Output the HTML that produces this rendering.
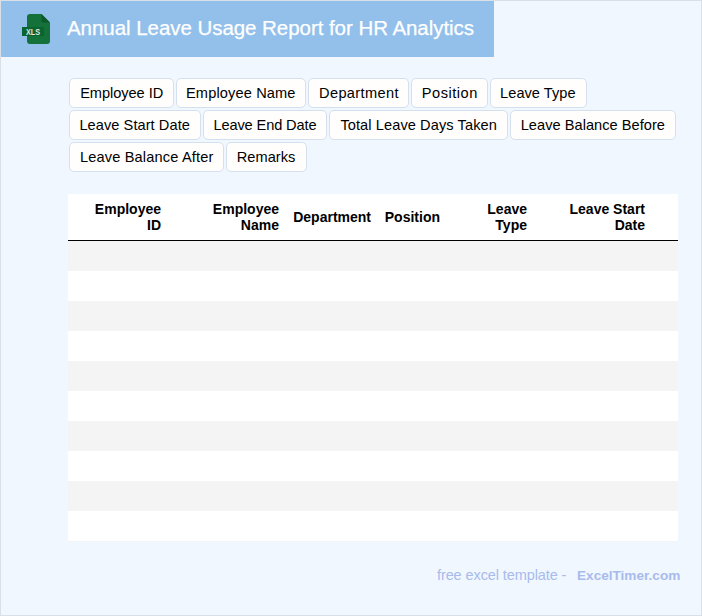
<!DOCTYPE html>
<html><head><meta charset="utf-8">
<style>
html,body{margin:0;padding:0}
body{width:700px;height:614px;border:1px solid #d9e0e8;background:#f0f7fe;position:relative;overflow:hidden;font-family:"Liberation Sans",sans-serif}
.hdr{position:absolute;left:0;top:0;width:493px;height:56px;background:#92c0eb}
.ttl{position:absolute;left:66px;top:15px;font-size:20.5px;line-height:23px;color:#fff;letter-spacing:-0.05px;-webkit-text-stroke:0.25px #fff;white-space:nowrap}
.icon{position:absolute;left:18px;top:11px;width:32px;height:34px}
.chip{position:absolute;height:28px;border:1px solid #d5e0ee;border-radius:5px;background:#fffefc;box-sizing:content-box;white-space:nowrap}
.chip span{position:absolute;top:0;font-size:14.6px;line-height:28px;color:#000}
.tbl{position:absolute;left:67px;top:193px;width:610px;height:348px;background:#fff}
.th{position:absolute;font-size:14px;font-weight:bold;line-height:16px;color:#000;text-align:right;white-space:nowrap}
.line{position:absolute;left:0;top:46px;width:610px;height:1px;background:#000}
.row{position:absolute;left:0;width:610px;height:30px}
.g{background:#f4f4f4}
.foot{position:absolute;top:566px;white-space:nowrap;color:#a8bbec}
</style></head><body>
<div class="hdr">
  <svg class="icon" viewBox="0 0 32 34" width="32" height="34">
    <path d="M11 2 H22.5 L31 10.5 V29 A3 3 0 0 1 28 32 H11 A3 3 0 0 1 8 29 V5 A3 3 0 0 1 11 2 Z" fill="#147139"/>
    <path d="M22.5 2 L31 10.5 H22.5 Z" fill="#0c5a2c"/>
    <rect x="3" y="15" width="22" height="9" fill="#0a6430"/>
    <text x="7" y="22.9" font-family="Liberation Sans" font-size="8.2" font-weight="bold" fill="#e4e9e0" textLength="14" lengthAdjust="spacingAndGlyphs">XLS</text>
  </svg>
  <div class="ttl">Annual Leave Usage Report for HR Analytics</div>
</div>
<div class="chip" style="left:68px;top:77px;width:103px"><span style="left:10.2px;letter-spacing:-0.055px">Employee ID</span></div>
<div class="chip" style="left:175px;top:77px;width:128px"><span style="left:9.0px;letter-spacing:0.134px">Employee Name</span></div>
<div class="chip" style="left:307px;top:77px;width:99px"><span style="left:10.0px;letter-spacing:0.361px">Department</span></div>
<div class="chip" style="left:410px;top:77px;width:75px"><span style="left:9.8px;letter-spacing:0.511px">Position</span></div>
<div class="chip" style="left:489px;top:77px;width:95px"><span style="left:9.1px;letter-spacing:0.033px">Leave Type</span></div>
<div class="chip" style="left:68px;top:109px;width:130px"><span style="left:9.4px;letter-spacing:0.065px">Leave Start Date</span></div>
<div class="chip" style="left:202px;top:109px;width:122px"><span style="left:9.4px;letter-spacing:-0.113px">Leave End Date</span></div>
<div class="chip" style="left:328px;top:109px;width:177px"><span style="left:10.4px;letter-spacing:0.086px">Total Leave Days Taken</span></div>
<div class="chip" style="left:509px;top:109px;width:164px"><span style="left:9.7px;letter-spacing:0.036px">Leave Balance Before</span></div>
<div class="chip" style="left:68px;top:141px;width:153px"><span style="left:9.9px;letter-spacing:0.160px">Leave Balance After</span></div>
<div class="chip" style="left:225px;top:141px;width:79px"><span style="left:9.8px;letter-spacing:0.018px">Remarks</span></div>
<div class="tbl">
  <div class="th" style="right:517px;top:7px">Employee<br>ID</div>
  <div class="th" style="right:399px;top:7px">Employee<br>Name</div>
  <div class="th" style="right:307px;top:15px">Department</div>
  <div class="th" style="right:238px;top:15px">Position</div>
  <div class="th" style="right:151px;top:7px">Leave<br>Type</div>
  <div class="th" style="right:33px;top:7px">Leave Start<br>Date</div>
  <div class="line"></div>
  <div class="row g" style="top:47px"></div>
  <div class="row" style="top:77px"></div>
  <div class="row g" style="top:107px"></div>
  <div class="row" style="top:137px"></div>
  <div class="row g" style="top:167px"></div>
  <div class="row" style="top:197px"></div>
  <div class="row g" style="top:227px"></div>
  <div class="row" style="top:257px"></div>
  <div class="row g" style="top:287px"></div>
  <div class="row" style="top:317px"></div>
  <div class="row" style="top:347px;height:1px;background:#f3f4f5"></div>
</div>
<div class="foot" style="left:436px;font-size:14.5px;letter-spacing:-0.1px">free excel template - </div>
<div class="foot" style="left:576px;top:567px;font-size:13.6px;font-weight:bold">ExcelTimer.com</div>
</body></html>
